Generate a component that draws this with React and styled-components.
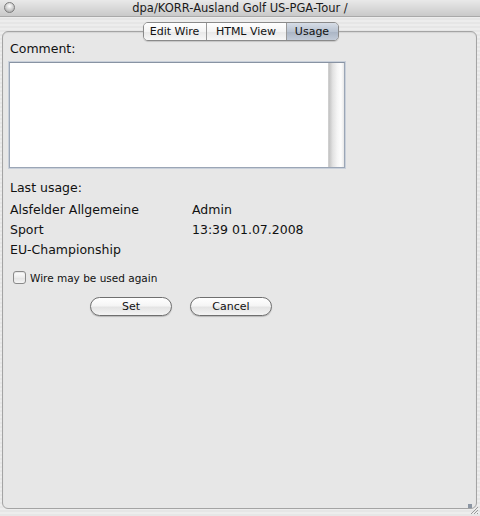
import React from "react";
import styled, { createGlobalStyle } from "styled-components";

const Global = createGlobalStyle`
  html, body { margin: 0; padding: 0; }
  body { width: 480px; height: 516px; overflow: hidden; font-family: "DejaVu Sans", "Liberation Sans", sans-serif; }
`;

const Window = styled.div`
  width: 480px;
  height: 516px;
  display: flex;
  flex-direction: column;
  background: repeating-linear-gradient(to bottom, #ededed 0px, #ededed 2px, #e6e6e6 2px, #e6e6e6 4px);
  position: relative;
`;

const TitleBar = styled.div`
  height: 16px;
  flex: none;
  display: flex;
  align-items: center;
  justify-content: center;
  background: linear-gradient(to bottom, #e9e9e9, #c9c9c9);
  border-bottom: 1px solid #a9a9a9;
  position: relative;
  font-size: 11.5px;
  color: #1a1a1a;
`;

const CloseDot = styled.span`
  position: absolute;
  left: 4px;
  top: 2px;
  width: 11px;
  height: 11px;
  border-radius: 50%;
  box-sizing: border-box;
  border: 1px solid #7d7d7d;
  background: radial-gradient(circle at 50% 35%, #ffffff 0%, #d4d4d4 45%, #9a9a9a 100%);
`;

const Body = styled.div`
  flex: 1;
  display: flex;
  flex-direction: column;
  padding: 5px 3px 7px 2px;
  min-height: 0;
`;

const TabBar = styled.div`
  display: flex;
  justify-content: center;
  position: relative;
  z-index: 1;
  padding-left: 2px;
`;

const Tabs = styled.div`
  display: flex;
  height: 17px;
  border: 1px solid #8a8a8a;
  border-radius: 5px;
  overflow: hidden;
  box-shadow: 0 1px 1px rgba(0,0,0,0.15);
`;

const Tab = styled.div`
  width: ${(p) => p.w}px;
  display: flex;
  align-items: center;
  justify-content: center;
  font-size: 11px;
  color: #111;
  background: ${(p) =>
    p.active
      ? "linear-gradient(to bottom, #d7dde6 0%, #b9c3d1 50%, #a9b4c4 51%, #c2cbd8 100%)"
      : "linear-gradient(to bottom, #ffffff 0%, #f4f4f4 50%, #e8e8e8 51%, #f7f7f7 100%)"};
  border-left: ${(p) => (p.first ? "none" : "1px solid #9a9a9a")};
`;

const Panel = styled.div`
  flex: 1;
  margin-top: -10px;
  border: 1px solid #a4a4a4;
  border-radius: 6px;
  background: #e7e7e7;
  box-shadow: inset 0 1px 1px rgba(0,0,0,0.08);
  padding: 9px 0 0 6px;
  display: flex;
  flex-direction: column;
  font-size: 12.5px;
  color: #111;
`;

const Label = styled.div`
  padding-left: 1px;
  line-height: 15px;
`;

const TextAreaBox = styled.div`
  margin-top: 6px;
  width: 336px;
  height: 106px;
  box-sizing: border-box;
  border: 1px solid #9ba6b6;
  border-top-color: #8893a3;
  box-shadow: 0 0 0 1px #c9d0da;
  background: #fff;
  display: flex;
  justify-content: flex-end;
`;

const ScrollTrack = styled.div`
  width: 15px;
  height: 100%;
  background: linear-gradient(to right, #c2c2c2 0%, #e2e2e2 25%, #f5f5f5 55%, #fdfdfd 80%, #e8e8e8 100%);
  border-left: 1px solid #cfcfcf;
`;

const Section = styled.div`
  margin-top: 12px;
  display: grid;
  grid-template-columns: 182px auto;
  row-gap: 5px;
  padding-left: 1px;
  line-height: 15px;
`;

const Heading = styled.div`
  grid-column: 1 / -1;
  margin-bottom: 2px;
`;

const CheckRow = styled.label`
  margin-top: 14px;
  display: flex;
  align-items: center;
  gap: 4px;
  font-size: 10.5px;
  padding-left: 4px;
`;

const CheckBox = styled.span`
  width: 13px;
  height: 13px;
  box-sizing: border-box;
  border: 1px solid #8a8a8a;
  border-radius: 3px;
  background: linear-gradient(to bottom, #ffffff, #ececec 50%, #e2e2e2 51%, #f5f5f5);
  box-shadow: inset 0 1px 1px rgba(0,0,0,0.1);
`;

const ButtonRow = styled.div`
  margin-top: 13px;
  display: flex;
  gap: 18px;
  padding-left: 81px;
`;

const Button = styled.div`
  width: 82px;
  height: 19px;
  box-sizing: border-box;
  border: 1px solid #6f6f6f;
  border-radius: 10px;
  display: flex;
  align-items: center;
  justify-content: center;
  font-size: 11px;
  color: #111;
  background: linear-gradient(to bottom, #ffffff 0%, #f5f5f5 45%, #e4e4e4 55%, #f4f4f4 100%);
  box-shadow: 0 1px 1px rgba(0,0,0,0.2);
`;

const Grip = styled.svg`
  position: absolute;
  right: 1px;
  bottom: 1px;
`;

export default function App() {
  return (
    <>
      <Global />
      <Window>
        <TitleBar>
          <CloseDot />
          dpa/KORR-Ausland Golf US-PGA-Tour /
        </TitleBar>
        <Body>
          <TabBar>
            <Tabs>
              <Tab w={62} first>Edit Wire</Tab>
              <Tab w={79}>HTML View</Tab>
              <Tab w={51} active>Usage</Tab>
            </Tabs>
          </TabBar>
          <Panel>
            <Label>Comment:</Label>
            <TextAreaBox>
              <ScrollTrack />
            </TextAreaBox>
            <Section>
              <Heading>Last usage:</Heading>
              <div>Alsfelder Allgemeine</div>
              <div>Admin</div>
              <div>Sport</div>
              <div>13:39 01.07.2008</div>
              <div>EU-Championship</div>
              <div />
            </Section>
            <CheckRow>
              <CheckBox />
              Wire may be used again
            </CheckRow>
            <ButtonRow>
              <Button>Set</Button>
              <Button>Cancel</Button>
            </ButtonRow>
          </Panel>
        </Body>
        <Grip width="12" height="12" viewBox="0 0 12 12">
          <rect x="1" y="1" width="4" height="4" fill="#8c96a3" />
          <line x1="4" y1="11" x2="11" y2="4" stroke="#9a9a9a" strokeWidth="1" />
          <line x1="7" y1="11" x2="11" y2="7" stroke="#9a9a9a" strokeWidth="1" />
          <line x1="10" y1="11" x2="11" y2="10" stroke="#9a9a9a" strokeWidth="1" />
        </Grip>
      </Window>
    </>
  );
}
